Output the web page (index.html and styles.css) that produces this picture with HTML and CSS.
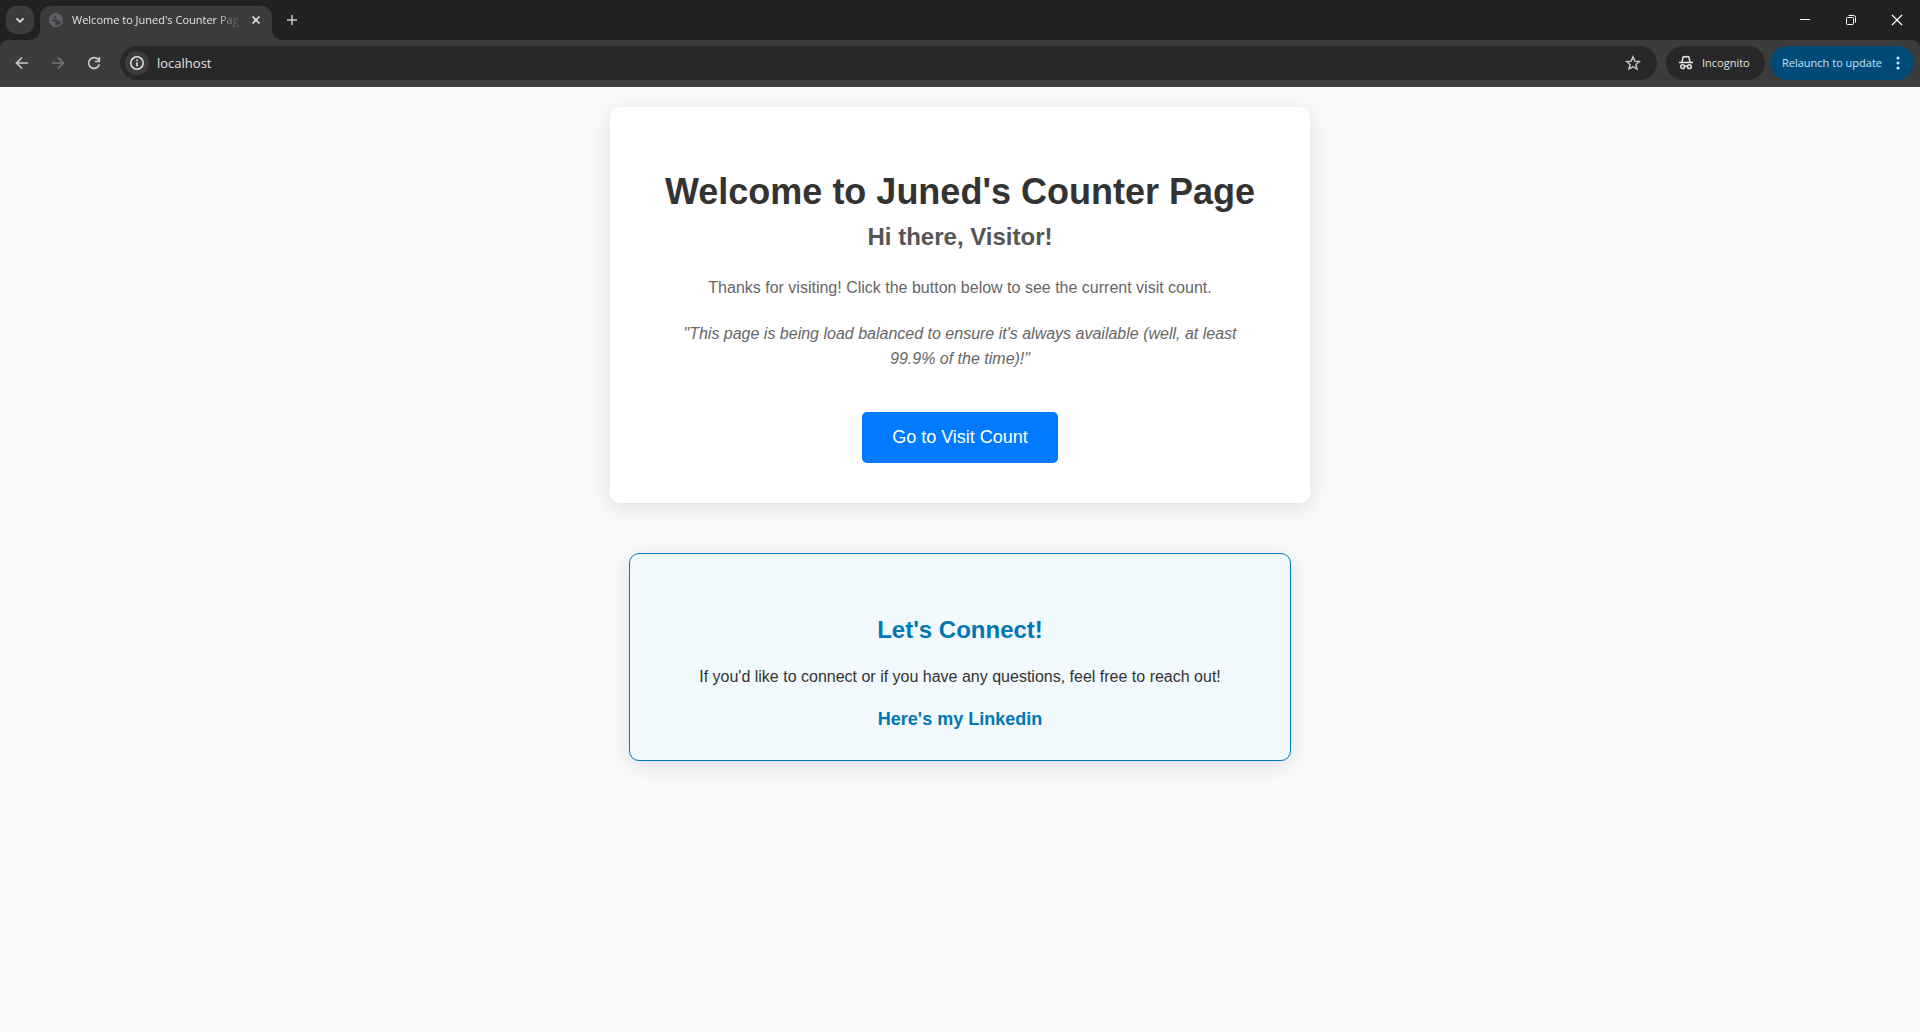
FILE: index.html
```html
<!DOCTYPE html>
<html lang="en">
<head>
<meta charset="utf-8">
<title>Welcome to Juned's Counter Page</title>
<link rel="stylesheet" href="styles.css">
</head>
<body>
<header class="browser">
  <div class="tab-strip">
    <button class="tab-search" aria-label="Search tabs">
      <svg width="16" height="16" viewBox="0 0 16 16"><path d="M4.500 6.300 8 9.800l3.500-3.500" fill="none" stroke="#e3e3e3" stroke-width="1.800"/></svg>
    </button>
    <div class="tab">
      <svg class="globe" width="14" height="14" viewBox="0 0 14 14"><circle cx="7" cy="7" r="7" fill="#5f6368"/><path d="M8.500 1.800C6.500 2 6 3 7 3.500s.5 1.300-.8 1.500S5 6.500 6.500 6.600s2.500.4 2.500 1.400 1 .8 1.500.2l1.800-.2c-.4 2-1.600 3.300-3 4l-3 .3c-.7-.7-.2-1.500.3-2S6 8.700 5 8.500 3 7.500 1.500 7.300C2.600 7.100 3.800 7.500 4.400 6.600S3.800 5 4.700 4.200 6 2 8.500 1.800Z" fill="#3c3c3c"/></svg>
      <span class="tab-title">Welcome to Juned's Counter Page</span>
      <button class="icon-button tab-close" aria-label="Close tab">
        <svg width="16" height="16" viewBox="0 0 16 16"><path d="m4.500 4.500 7 7m0-7-7 7" stroke="#e3e3e3" stroke-width="1.600"/></svg>
      </button>
    </div>
    <button class="icon-button new-tab" aria-label="New tab">
      <svg width="16" height="16" viewBox="0 0 16 16"><path d="M8 3v10M3 8h10" stroke="#c7c7c7" stroke-width="1.500"/></svg>
    </button>
    <div class="window-controls">
      <button class="window-button" aria-label="Minimize"><svg width="12" height="12" viewBox="0 0 12 12"><path d="M1 5.500h10" stroke="#fff"/></svg></button>
      <button class="window-button" aria-label="Restore"><svg width="12" height="12" viewBox="0 0 12 12" fill="none" stroke="#fff"><rect x="1.500" y="3.500" width="7" height="7" rx="1"/><path d="M3.500 1.500H8.500a2 2 0 0 1 2 2v5"/></svg></button>
      <button class="window-button" aria-label="Close"><svg width="12" height="12" viewBox="0 0 12 12"><path d="m1 1 10 10M11 1 1 11" stroke="#fff" stroke-width="1.200"/></svg></button>
    </div>
  </div>
  <div class="toolbar">
    <nav class="history">
      <button class="icon-button" aria-label="Back"><svg width="16" height="16" viewBox="0 0 16 16" fill="none" stroke="#c7c7c7" stroke-width="1.700"><path d="M14 8H3M8 2.500 2.500 8 8 13.500"/></svg></button>
      <button class="icon-button" aria-label="Forward" disabled><svg width="16" height="16" viewBox="0 0 16 16" fill="none" stroke="#757575" stroke-width="1.700"><path d="M2 8h11M8 2.500 13.500 8 8 13.500"/></svg></button>
      <button class="icon-button" aria-label="Reload"><svg width="16" height="16" viewBox="0 0 16 16" fill="none" stroke="#c7c7c7" stroke-width="1.700"><path d="M13.300 9.200A5.400 5.400 0 1 1 12.300 4.700L13.500 6.200M13.300 2v4.500H8.800"/></svg></button>
    </nav>
    <div class="omnibox">
      <button class="site-info" aria-label="View site information">
        <svg width="16" height="16" viewBox="0 0 16 16"><circle cx="8" cy="8" r="6.200" fill="none" stroke="#e3e3e3" stroke-width="1.500"/><path d="M8 7.200v4M8 4.500v1.600" stroke="#e3e3e3" stroke-width="1.600"/></svg>
      </button>
      <input class="address" type="text" value="localhost" aria-label="Address and search bar">
      <button class="icon-button" aria-label="Bookmark this tab">
        <svg width="16" height="16" viewBox="0 0 16 16"><path d="m8 1.900 1.800 4.200 4.600.4-3.500 3 1.100 4.500L8 11.600 4 14l1.100-4.500-3.500-3 4.600-.4Z" fill="none" stroke="#c7c7c7" stroke-width="1.400"/></svg>
      </button>
    </div>
    <button class="chip incognito">
      <svg width="16" height="16" viewBox="0 0 16 16" fill="none" stroke="#e3e3e3" stroke-width="1.500"><path d="M1 7.500h14M3.900 7.200 5.200 1.900l1.300-.4L8 2l1.500-.5 1.300.4 1.300 5.300M6.300 11.500q1.700-1 3.400 0"/><circle cx="4.600" cy="11.700" r="1.900"/><circle cx="11.400" cy="11.700" r="1.900"/></svg>
      <span>Incognito</span>
    </button>
    <button class="chip relaunch">
      <span>Relaunch to update</span>
      <svg width="4" height="16" viewBox="0 0 4 16" fill="#c2e7ff"><circle cx="2" cy="3" r="1.600"/><circle cx="2" cy="8" r="1.600"/><circle cx="2" cy="13" r="1.600"/></svg>
    </button>
  </div>
</header>

<main class="page">
  <section class="card welcome">
    <h1>Welcome to Juned's Counter Page</h1>
    <h2>Hi there, Visitor!</h2>
    <p>Thanks for visiting! Click the button below to see the current visit count.</p>
    <p class="quote">"This page is being load balanced to ensure it's always available (well, at least 99.9% of the time)!"</p>
    <button class="visit-button">Go to Visit Count</button>
  </section>
  <section class="card connect">
    <h2>Let's Connect!</h2>
    <p>If you'd like to connect or if you have any questions, feel free to reach out!</p>
    <a href="#linkedin">Here's my Linkedin</a>
  </section>
</main>
</body>
</html>
```
FILE: styles.css
```css
* {
  box-sizing: border-box;
}

body {
  margin: 0;
  background: #f8f9fb;
  color: #333;
  font: 16px/25px Arial, "Liberation Sans", sans-serif;
}

button,
input {
  margin: 0;
  padding: 0;
  border: 0;
  background: none;
  color: inherit;
  font: inherit;
}

svg {
  display: block;
  flex: none;
}

/* Browser frame */
.browser {
  background: #202222;
  color: #e3e3e3;
  font: 11px/16px "Segoe UI", "Open Sans", sans-serif;
}

.tab-strip {
  display: flex;
  height: 40px;
  padding: 6px 0 0 6px;
}

.tab-search {
  display: grid;
  place-items: center;
  width: 28px;
  height: 28px;
  border-radius: 10px;
  background: #3c3c3c;
}

.icon-button {
  display: grid;
  place-items: center;
  width: 28px;
  height: 28px;
}

.tab {
  position: relative;
  display: flex;
  align-items: center;
  width: 232px;
  margin-left: 6px;
  padding: 0 8px 6px 9px;
  border-radius: 10px 10px 0 0;
  background: #3c3c3c;
}

/* Curved feet joining the tab to the toolbar */
.tab::before,
.tab::after {
  content: "";
  position: absolute;
  bottom: 0;
  width: 10px;
  height: 10px;
}

.tab::before {
  right: 100%;
  background: radial-gradient(circle at 0 0, transparent 10px, #3c3c3c 10px);
}

.tab::after {
  left: 100%;
  background: radial-gradient(circle at 100% 0, transparent 10px, #3c3c3c 10px);
}

.tab-title {
  flex: 1;
  margin-left: 9px;
  overflow: hidden;
  white-space: nowrap;
  -webkit-mask-image: linear-gradient(to left, transparent, #000 24px);
  mask-image: linear-gradient(to left, transparent, #000 24px);
}

.tab-close {
  width: 16px;
  margin-left: 8px;
}

.new-tab {
  margin-left: 6px;
}

.window-controls {
  display: flex;
  margin-left: auto;
}

.window-button {
  display: grid;
  place-items: center;
  width: 46px;
  height: 28px;
}

.toolbar {
  display: flex;
  align-items: center;
  height: 47px;
  padding: 0 6px 1px 8px;
  border-bottom: 1px solid #434343;
  border-radius: 8px 8px 0 0;
  background: #3c3c3c;
}

.history {
  display: flex;
  gap: 8px;
}

.omnibox {
  display: flex;
  flex: 1;
  align-items: center;
  height: 34px;
  margin: 0 9px 0 12px;
  padding: 0 10px 0 5px;
  border-radius: 17px;
  background: #282828;
}

.site-info {
  display: grid;
  place-items: center;
  width: 24px;
  height: 24px;
  border-radius: 12px;
  background: #3c3c3c;
}

.address {
  flex: 1;
  margin-left: 8px;
  font-size: 13px;
  outline: none;
}

.chip {
  display: flex;
  align-items: center;
  height: 34px;
  border-radius: 17px;
}

.incognito {
  gap: 8px;
  min-width: 99px;
  margin-right: 5px;
  padding: 0 12px;
  background: #282828;
}

.relaunch {
  justify-content: space-between;
  min-width: 144px;
  padding: 0 14px 0 12px;
  background: #004a77;
  color: #c2e7ff;
}

/* Page */
.page {
  display: flex;
  flex-direction: column;
  align-items: center;
  gap: 50px;
  padding: 20px;
}

.card {
  display: flex;
  flex-direction: column;
  align-items: center;
  width: 100%;
  border-radius: 10px;
  box-shadow: 0 5px 20px rgba(0, 0, 0, 0.1);
  text-align: center;
}

.card h1,
.card h2,
.card p {
  margin: 0;
}

.card h1 {
  font-size: 36px;
  line-height: 44px;
}

.card h2 {
  font-size: 24px;
  line-height: 28px;
}

.welcome {
  max-width: 700px;
  padding: 63px 40px 40px;
  background: #fff;
}

.welcome h2 {
  margin: 9px 0 24px;
  color: #555;
}

.welcome p {
  padding: 0 20px;
  color: #666;
}

.welcome .quote {
  margin: 21px 0 41px;
  font-style: italic;
}

.visit-button {
  padding: 15px 30px;
  border-radius: 5px;
  background: #007bff;
  color: #fff;
  font-size: 18px;
  line-height: 21px;
}

.connect {
  max-width: 662px;
  padding: 62px 30px 30px;
  border: 1px solid #0077b5;
  background: #f1f9fc;
}

.connect h2 {
  color: #0077b5;
}

.connect p {
  margin: 20px 0;
}

.connect a {
  color: #0077b5;
  font-size: 18px;
  font-weight: bold;
  line-height: 21px;
  text-decoration: none;
}
```
